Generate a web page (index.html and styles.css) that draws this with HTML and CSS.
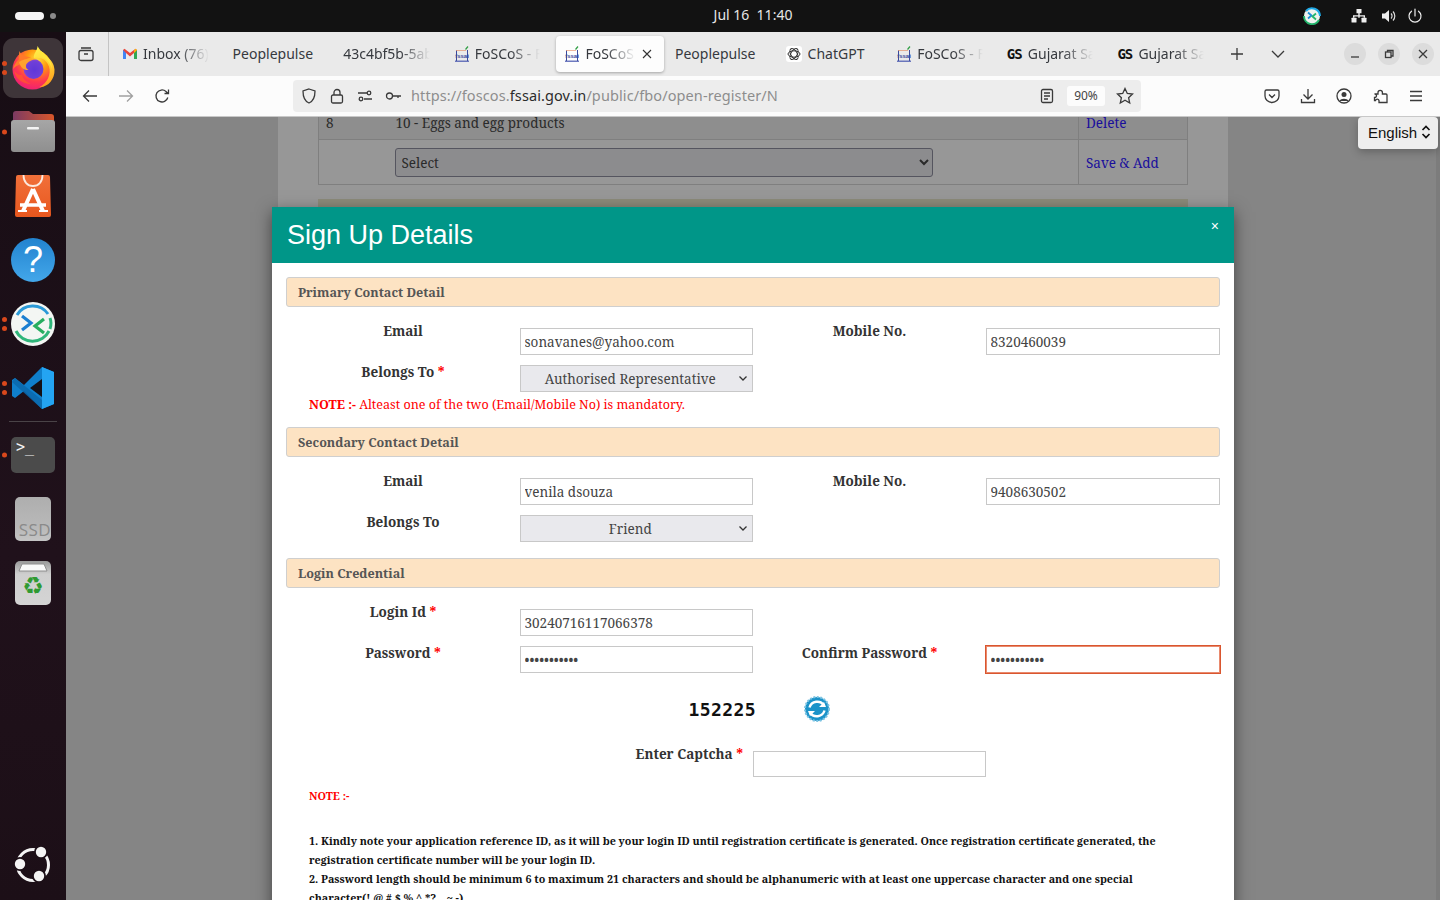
FILE: index.html
```html
<!DOCTYPE html>
<html lang="en">
<head>
<meta charset="utf-8">
<title>FoSCoS - Sign Up Details</title>
<link rel="stylesheet" href="styles.css">
</head>
<body>
<header class="topbar">
  <div class="workspaces"><span class="ws-pill"></span><span class="ws-dot"></span></div>
  <div class="clock">Jul 16&nbsp;&nbsp;11:40</div>
  <div class="tray">
    <svg class="tray-rd" width="18" height="18" viewBox="0 0 18 18"><circle cx="9" cy="9" r="8" fill="#eef3ef"/><path d="M3 4a8 8 0 0 1 14 5" fill="none" stroke="#1fa9e6" stroke-width="2"/><path d="M1 9a8 8 0 0 0 15 4" fill="none" stroke="#23b56c" stroke-width="2"/><path d="M5 5.500L8.500 8.500 5 11.500" fill="none" stroke="#1b8fd8" stroke-width="1.800"/><path d="M13 6.500L9.500 9.500l3.500 3" fill="none" stroke="#23b56c" stroke-width="1.800"/></svg>
    <svg class="tray-net" width="16" height="16" viewBox="0 0 16 16"><path d="M5.500 1h5v4.200h-1.800v2.100H14v2.500h-1.400V8.600H8.700v1.200H7.300V8.600H3.400v1.200H2V7.300h5.300V5.200H5.500z" fill="#eee"/><rect x="0.500" y="9.800" width="5" height="4.700" rx=".5" fill="#eee"/><rect x="10.500" y="9.800" width="5" height="4.700" rx=".5" fill="#eee"/></svg>
    <svg class="tray-vol" width="16" height="16" viewBox="0 0 16 16"><path fill="#eee" d="M1 5.500h3L8 2v12l-4-3.500H1z"/><path d="M10 5.500a3.500 3.500 0 0 1 0 5M12 3.500a6.500 6.500 0 0 1 0 9" fill="none" stroke="#ddd" stroke-width="1.200"/></svg>
    <svg class="tray-pow" width="16" height="16" viewBox="0 0 16 16"><path d="M8 1v7M4.500 3.200a6 6 0 1 0 7 0" fill="none" stroke="#eee" stroke-width="1.200" stroke-linecap="round"/></svg>
  </div>
</header>

<div class="desktop">
  <nav class="dock">
    <div class="dock-item active">
      <span class="dots"><i></i><i></i></span>
      <svg width="44" height="44" viewBox="0 0 44 44">
        <defs>
          <radialGradient id="fxBase" cx="0.62" cy="0.25" r="0.9"><stop offset="0" stop-color="#ffe03a"/><stop offset="0.3" stop-color="#ff980e"/><stop offset="0.62" stop-color="#ff3750"/><stop offset="1" stop-color="#e31587"/></radialGradient>
          <linearGradient id="fxFlame" x1="0.4" y1="0" x2="0.6" y2="1"><stop offset="0" stop-color="#fff04a"/><stop offset="0.6" stop-color="#ffc52e"/><stop offset="1" stop-color="#ff9a1c"/></linearGradient>
          <radialGradient id="fxGlobe" cx="0.55" cy="0.55" r="0.6"><stop offset="0" stop-color="#5f37d8"/><stop offset="0.7" stop-color="#6f3fd8"/><stop offset="1" stop-color="#a246c8"/></radialGradient>
        </defs>
        <circle cx="21.500" cy="23.500" r="20" fill="url(#fxBase)"/>
        <path d="M26.500 0C26.500 5 22 7.500 23 12c7-1.500 13 2 15 8.500 2.500 8-2 17-9.500 20.500C37 41.500 44 33 43.500 23.500 43 12 32 10 26.500 0z" fill="url(#fxFlame)"/>
        <path d="M30 5c6 4 11 10 11 18-2-7-6-10-11-13-1-2-1-3 0-5z" fill="#ffe63a"/>
        <circle cx="22.500" cy="23" r="10" fill="url(#fxGlobe)"/>
        <path d="M8.500 5c-.5 3-1 6-.5 8.500-3 2.500-5.500 6-6 9.500 3-3.500 7-5 10.500-5 .5-3.500 4-6.500 7.500-6.500-2-1-4-.5-6-1.500C11.500 9 9.500 8 8.500 5z" fill="#ff7a2a"/>
        <path d="M8 16c5-3.500 12-4.500 18-2.500-5 0-9.500 2-11 5.500-.5 2 .5 4 2.500 5-4 .5-8-2-9.500-8z" fill="#ffa32e"/>
        <path d="M3 24c1 9 9 14 17 14-5-2-8-5-9-9-4 .5-6-2-8-5z" fill="#ff5a2a" opacity=".75"/>
      </svg>
    </div>
    <div class="dock-item">
      <span class="dots"><i></i></span>
      <svg width="44" height="42" viewBox="0 0 44 42">
        <defs>
          <linearGradient id="fdBack" x1="0" y1="0" x2="1" y2="0"><stop offset="0" stop-color="#7c3a63"/><stop offset="1" stop-color="#d9572a"/></linearGradient>
          <linearGradient id="fdFront" x1="0" y1="0" x2="0" y2="1"><stop offset="0" stop-color="#a6a6a6"/><stop offset="1" stop-color="#8f8f8f"/></linearGradient>
        </defs>
        <path d="M2 16V3a3 3 0 0 1 3-3h13l4 3h18a3 3 0 0 1 3 3v12z" fill="url(#fdBack)"/>
        <path d="M3 9h38a3 3 0 0 1 3 3v26a3 3 0 0 1-3 3H3a3 3 0 0 1-3-3V12a3 3 0 0 1 3-3z" fill="url(#fdFront)"/>
        <rect x="16" y="16" width="12" height="2.500" rx="1" fill="#f4f4f4"/>
      </svg>
    </div>
    <div class="dock-item">
      <svg width="36" height="42" viewBox="0 0 36 42">
        <defs><linearGradient id="stBag" x1="0" y1="0" x2="0" y2="1"><stop offset="0" stop-color="#f1703a"/><stop offset="1" stop-color="#e8571e"/></linearGradient></defs>
        <path d="M3 0h30a2 2 0 0 1 2 2l1 38a2 2 0 0 1-2 2H2a2 2 0 0 1-2-2L1 2a2 2 0 0 1 2-2z" fill="url(#stBag)"/>
        <path d="M8.500 0c0 7 4 11 9.500 11S27.500 7 27.500 0" fill="none" stroke="#fbe9df" stroke-width="1.800"/>
        <path d="M18 14L8 36M18 14l10 22" stroke="#fff" stroke-width="4" fill="none"/>
        <path d="M5 30h26" stroke="#fff" stroke-width="3.500"/>
        <path d="M3 36h9M24 36h9" stroke="#fff" stroke-width="2"/>
      </svg>
    </div>
    <div class="dock-item">
      <div class="help-icon">?</div>
    </div>
    <div class="dock-item">
      <span class="dots"><i></i><i></i></span>
      <svg width="44" height="44" viewBox="0 0 44 44">
        <circle cx="22" cy="22" r="22" fill="#f3f6f3"/>
        <path d="M5 29a18.500 18.500 0 0 0 33 0" fill="none" stroke="#2fb67a" stroke-width="3"/>
        <path d="M6 13a18.500 18.500 0 0 1 31-1" fill="none" stroke="#2b9ad8" stroke-width="3"/>
        <path d="M39 16c1.500 4 1 8 0 11" fill="none" stroke="#2fb67a" stroke-width="3"/>
        <path d="M11 14l9 7-9 7" fill="none" stroke="#1a7fd1" stroke-width="3.200"/>
        <path d="M33 17l-9 7 9 7" fill="none" stroke="#27ae60" stroke-width="3.200"/>
      </svg>
    </div>
    <div class="dock-item">
      <span class="dots"><i></i><i></i></span>
      <svg width="44" height="44" viewBox="0 0 44 44">
        <path d="M31 1L13 19 4 12 1 14v16l3 2 9-7 18 18 12-5V6z" fill="#0f7fcb"/>
        <path d="M31 1l12 5v32l-12 5z" fill="#24a4f2"/>
        <path d="M4 12l27 22v9L1 16z" fill="#0b69ad" opacity=".85"/>
        <path d="M31 13L19 22l12 9z" fill="#151015"/>
      </svg>
    </div>
    <div class="dock-sep"></div>
    <div class="dock-item">
      <span class="dots"><i></i></span>
      <div class="term-icon">&gt;_</div>
    </div>
    <div class="dock-item"><div class="ssd-icon">SSD</div></div>
    <div class="dock-item">
      <div class="trash-icon">
        <svg class="trash-lid" width="30" height="9" viewBox="0 0 30 9"><path d="M4 1h22l3 7H1z" fill="#fafafa" stroke="#8e8e8e"/></svg>
        <span class="recycle">♻</span>
      </div>
    </div>
    <div class="dock-spacer"></div>
    <div class="dock-ubuntu">
      <svg width="38" height="38" viewBox="0 0 38 38">
        <circle cx="19" cy="19" r="15.500" fill="none" stroke="#f4f4f4" stroke-width="3"/>
        <circle cx="6" cy="18" r="7" fill="#1c0f17"/><circle cx="27" cy="6" r="7" fill="#1c0f17"/><circle cx="25" cy="30" r="7" fill="#1c0f17"/>
        <circle cx="6" cy="18" r="5.200" fill="#f4f4f4"/><circle cx="27" cy="6" r="5.200" fill="#f4f4f4"/><circle cx="25" cy="30" r="5.200" fill="#f4f4f4"/>
      </svg>
    </div>
  </nav>

  <main class="browser">
    <div class="tabbar">
      <button class="fxview">
        <svg class="ic" width="16" height="16" viewBox="0 0 16 16"><rect x="1" y="4.500" width="14" height="10" rx="2"/><path d="M3 2h10M6 8h4"/></svg>
      </button>
      <div class="tabs">
        <div class="tab"><svg class="fav" width="16" height="16" viewBox="0 0 16 16"><path d="M1 4v9h3V7l4 3.500L12 7v6h3V4l-1.500-1.200L8 7 2.500 2.800z" fill="#e8453c"/><path d="M1 4v9h3V7z" fill="#4285f4"/><path d="M12 7v6h3V4z" fill="#34a853"/><path d="M13.500 2.800L15 4l-3 3V4.500z" fill="#fbbc04"/></svg><span class="tab-title">Inbox (76)</span></div>
        <div class="tab tab-fit"><span class="tab-title">Peoplepulse</span></div>
        <div class="tab"><span class="tab-title">43c4bf5b-5ab8</span></div>
        <div class="tab"><svg class="fav" width="16" height="16" viewBox="0 0 16 16"><path d="M2.500 15V4.500M13.500 15V4" stroke="#3b4a9c" fill="none"/><path d="M2.500 4.500h9" stroke="#e0713a" stroke-dasharray="1 1"/><path d="M1 15.200h14" stroke="#4a58b0" stroke-width="1.200"/><path d="M11.500 3.500l2.500-3" stroke="#2f9e44" stroke-width="1.200"/><text x="8" y="12" class="fav-text">fssai</text></svg><span class="tab-title">FoSCoS - FSSAI</span></div>
        <div class="tab tab-active"><svg class="fav" width="16" height="16" viewBox="0 0 16 16"><path d="M2.500 15V4.500M13.500 15V4" stroke="#3b4a9c" fill="none"/><path d="M2.500 4.500h9" stroke="#e0713a" stroke-dasharray="1 1"/><path d="M1 15.200h14" stroke="#4a58b0" stroke-width="1.200"/><path d="M11.500 3.500l2.500-3" stroke="#2f9e44" stroke-width="1.200"/><text x="8" y="12" class="fav-text">fssai</text></svg><span class="tab-title">FoSCoS - FSSAI</span><svg class="tab-close" width="10" height="10" viewBox="0 0 10 10"><path d="M1 1l8 8M9 1l-8 8" stroke="#333" stroke-width="1.100"/></svg></div>
        <div class="tab tab-fit"><span class="tab-title">Peoplepulse</span></div>
        <div class="tab tab-fit"><svg class="fav fav-white" width="16" height="16" viewBox="0 0 16 16"><g fill="none" stroke="#333" stroke-width="1"><ellipse cx="8" cy="8" rx="6" ry="3.200"/><ellipse cx="8" cy="8" rx="6" ry="3.200" transform="rotate(60 8 8)"/><ellipse cx="8" cy="8" rx="6" ry="3.200" transform="rotate(120 8 8)"/></g></svg><span class="tab-title">ChatGPT</span></div>
        <div class="tab"><svg class="fav" width="16" height="16" viewBox="0 0 16 16"><path d="M2.500 15V4.500M13.500 15V4" stroke="#3b4a9c" fill="none"/><path d="M2.500 4.500h9" stroke="#e0713a" stroke-dasharray="1 1"/><path d="M1 15.200h14" stroke="#4a58b0" stroke-width="1.200"/><path d="M11.500 3.500l2.500-3" stroke="#2f9e44" stroke-width="1.200"/><text x="8" y="12" class="fav-text">fssai</text></svg><span class="tab-title">FoSCoS - FSSAI</span></div>
        <div class="tab"><span class="fav gs">GS</span><span class="tab-title">Gujarat Samachar</span></div>
        <div class="tab"><span class="fav gs">GS</span><span class="tab-title">Gujarat Samachar</span></div>
      </div>
      <svg class="ic tab-plus" width="14" height="14" viewBox="0 0 14 14"><path d="M7 1v12M1 7h12"/></svg>
      <svg class="ic tab-list" width="14" height="14" viewBox="0 0 14 14"><path d="M1 4l6 6 6-6"/></svg>
      <div class="winctl">
        <span class="winbtn"><svg class="ic" width="10" height="10" viewBox="0 0 10 10"><path d="M1 8h8"/></svg></span>
        <span class="winbtn"><svg class="ic" width="10" height="10" viewBox="0 0 10 10"><rect x="1.500" y="3" width="5.500" height="5.500"/><path d="M3.500 3V1.500H9V7H7"/></svg></span>
        <span class="winbtn"><svg class="ic" width="10" height="10" viewBox="0 0 10 10"><path d="M1 1l8 8M9 1l-8 8"/></svg></span>
      </div>
    </div>

    <div class="navbar">
      <svg class="ic nav-back" width="16" height="16" viewBox="0 0 16 16"><path d="M15 8H1.500M7 2.500L1.500 8 7 13.500"/></svg>
      <svg class="ic nav-fwd" width="16" height="16" viewBox="0 0 16 16"><path d="M1 8h13.500M9 2.500L14.500 8 9 13.500"/></svg>
      <svg class="ic nav-reload" width="16" height="16" viewBox="0 0 16 16"><path d="M13.800 9.500A6 6 0 1 1 12 3.500L14 5.500M14.500 1.500v4h-4"/></svg>
      <div class="urlbar">
        <svg class="ic ub-ic" width="16" height="16" viewBox="0 0 16 16"><path d="M8 1l6 2c0 6-1 10-6 12C3 13 2 9 2 3z"/></svg>
        <svg class="ic ub-ic" width="16" height="16" viewBox="0 0 16 16"><rect x="2.500" y="7" width="11" height="8" rx="1.500"/><path d="M5 7V4.500a3 3 0 0 1 6 0V7"/></svg>
        <svg class="ic ub-ic" width="16" height="16" viewBox="0 0 16 16"><circle cx="4" cy="11" r="1.800"/><circle cx="12" cy="5" r="1.800"/><path d="M1 5h9M7 11h8"/></svg>
        <svg class="ic ub-ic" width="16" height="16" viewBox="0 0 16 16"><circle cx="4.500" cy="8" r="3"/><path d="M7.500 8H16M13 8v2"/></svg>
        <span class="url">https://foscos.<b>fssai.gov.in</b>/public/fbo/open-register/N</span>
        <svg class="ic ub-reader" width="14" height="16" viewBox="0 0 14 16"><rect x="1.500" y="1.500" width="11" height="13" rx="1.500"/><path d="M4 5h6M4 8h6M4 11h4"/></svg>
        <span class="zoom-pill">90%</span>
        <svg class="ic ub-star" width="18" height="18" viewBox="0 0 18 18"><path d="M9 1.500l2.300 5 5.200.6-3.900 3.600 1.100 5.300L9 13.300 4.300 16l1.100-5.300L1.500 7.100l5.200-.6z"/></svg>
      </div>
      <div class="nav-right">
        <svg class="ic" width="16" height="16" viewBox="0 0 16 16"><path d="M2.500 2h11A1.500 1.500 0 0 1 15 3.500V8a7 6.500 0 0 1-14 0V3.500A1.500 1.500 0 0 1 2.500 2zM5 6.500L8 9.500l3-3"/></svg>
        <svg class="ic" width="16" height="16" viewBox="0 0 16 16"><path d="M8 1v10M3.500 6.500L8 11l4.500-4.500M1.500 11v3.500h13V11"/></svg>
        <svg class="ic" width="16" height="16" viewBox="0 0 16 16"><circle cx="8" cy="8" r="7"/><circle cx="8" cy="6.500" r="2.500" class="ic-fill"/><path d="M3.500 13c1-3 8-3 9 0z" class="ic-fill"/></svg>
        <svg class="ic" width="16" height="16" viewBox="0 0 16 16"><path d="M1.500 6H5V4.500a2.200 2.200 0 0 1 4.400 0V6H13a1 1 0 0 1 1 1v7.500H6v-2a1.800 1.800 0 0 0-3.500 0H1.500V9.500a1.800 1.800 0 0 0 2-2 1.800 1.800 0 0 0-2-1.500z"/></svg>
        <svg class="ic" width="14" height="14" viewBox="0 0 14 14"><path d="M1 2.500h12M1 7h12M1 11.500h12"/></svg>
      </div>
    </div>

    <div class="viewport">
      <div class="page">
        <table class="food-table">
          <tr class="row-odd">
            <td class="c-no">8</td>
            <td class="c-name">10 - Eggs and egg products</td>
            <td class="c-act"><a>Delete</a></td>
          </tr>
          <tr>
            <td class="c-no"></td>
            <td class="c-name"><select class="bg-select"><option>Select</option></select></td>
            <td class="c-act"><a>Save &amp; Add</a></td>
          </tr>
        </table>
        <div class="beige-band"></div>
      </div>

      <div class="scroll-line"></div>
      <div class="lang-select">
        <span>English</span>
        <svg width="10" height="16" viewBox="0 0 10 16"><path d="M1.500 6L5 2.500 8.500 6M1.500 10L5 13.500 8.500 10" fill="none" stroke="#111" stroke-width="1.700"/></svg>
      </div>

      <section class="modal">
        <div class="modal-head">
          <h1>Sign Up Details</h1>
          <span class="modal-close">×</span>
        </div>
        <div class="modal-body">
          <div class="sec-head">Primary Contact Detail</div>
          <div class="form-grid">
            <label>Email</label>
            <input value="sonavanes@yahoo.com">
            <label>Mobile No.</label>
            <input value="8320460039">
            <label>Belongs To <em>*</em></label>
            <select><option>Authorised Representative</option></select>
          </div>
          <p class="note-line"><b>NOTE :-</b> Alteast one of the two (Email/Mobile No) is mandatory.</p>

          <div class="sec-head">Secondary Contact Detail</div>
          <div class="form-grid">
            <label>Email</label>
            <input value="venila dsouza">
            <label>Mobile No.</label>
            <input value="9408630502">
            <label>Belongs To</label>
            <select><option>Friend</option></select>
          </div>

          <div class="sec-head sec-login">Login Credential</div>
          <div class="form-grid">
            <label>Login Id <em>*</em></label>
            <input value="30240716117066378">
            <span></span><span></span>
            <label>Password <em>*</em></label>
            <input type="password" value="Abcdefgh@12">
            <label>Confirm Password <em>*</em></label>
            <input class="focused" type="password" value="Abcdefgh@12">
          </div>

          <div class="captcha-row">
            <span class="captcha-code">152225</span>
            <svg class="captcha-refresh" width="26" height="26" viewBox="0 0 26 26">
              <circle cx="13" cy="13" r="12" fill="#1b93c9" stroke="#7cc3e2" stroke-width="2" stroke-dasharray="2 1.500"/>
              <path d="M5.500 11.500A8 8 0 0 1 20 9.500" fill="none" stroke="#fff" stroke-width="2.400"/>
              <path d="M20.500 14.500A8 8 0 0 1 6 16.500" fill="none" stroke="#fff" stroke-width="2.400"/>
              <path d="M15 11h7l-2-5zM11 15H4l2 5z" fill="#fff"/>
            </svg>
          </div>
          <div class="form-grid captcha-input">
            <span></span>
            <label class="captcha-label">Enter Captcha <em>*</em></label>
            <input>
          </div>

          <p class="note-small">NOTE :-</p>
          <ol class="note-list">
            <li>1. Kindly note your application reference ID, as it will be your login ID until registration certificate is generated. Once registration certificate generated, the registration certificate number will be your login ID.</li>
            <li>2. Password length should be minimum 6 to maximum 21 characters and should be alphanumeric with at least one uppercase character and one special character(! @ # $ % ^ *? _ ~ -)</li>
          </ol>
        </div>
      </section>
    </div>
  </main>
</div>
</body>
</html>
```

FILE: styles.css
```css
* { box-sizing: border-box; }
html, body { margin: 0; height: 100%; overflow: hidden; }
body { width: 1440px; height: 900px; display: flex; flex-direction: column; background: #111; font-family: "Noto Sans", sans-serif; }

/* top bar */
.topbar { height: 32px; flex: none; background: #121212; display: grid; grid-template-columns: 1fr auto 1fr; align-items: center; color: #e6e6e6; }
.workspaces { display: flex; align-items: center; gap: 6px; padding-left: 15px; }
.ws-pill { width: 29px; height: 8px; border-radius: 4px; background: #f5f5f5; }
.ws-dot { width: 6px; height: 6px; border-radius: 50%; background: #8a8a8a; }
.clock { font-size: 14px; padding-bottom: 4px; position: relative; left: 33px; }
.tray { position: relative; height: 32px; }
.tray svg { position: absolute; top: 8px; }
.tray-rd { left: 544px; top: 7px !important; }
.tray-net { left: 592px; }
.tray-vol { left: 622px; }
.tray-pow { left: 648px; }

/* layout */
.desktop { flex: 1; display: flex; min-height: 0; }
.dock { width: 66px; flex: none; background: linear-gradient(180deg, #170d14, #20111b 60%, #1c0f17); display: flex; flex-direction: column; align-items: center; padding-top: 4px; }
.dock-item { position: relative; width: 60px; height: 64px; flex: none; display: flex; align-items: center; justify-content: center; }
.dock-item.active { height: 60px; margin: 2px 0; background: #3e3539; border-radius: 11px; }
.dots { position: absolute; left: -1px; top: 50%; transform: translateY(-50%); display: flex; flex-direction: column; gap: 4px; }
.dots i { display: block; width: 5px; height: 5px; border-radius: 50%; background: #d9481c; }
.dock-sep { width: 48px; height: 1px; background: #4a4347; margin: 1px 0; flex: none; }
.dock-spacer { flex: 1; }
.dock-ubuntu { height: 38px; margin-bottom: 16px; flex: none; }
.help-icon { width: 44px; height: 44px; border-radius: 50%; background: linear-gradient(180deg, #2283cf, #43a7ea); color: #fff; text-align: center; font: 400 36px/44px "Liberation Sans", sans-serif; }
.term-icon { width: 44px; height: 36px; border-radius: 5px; background: #4b4b4b; color: #f4f4f4; font: 400 15px/1 "DejaVu Sans Mono", monospace; padding: 3px 5px; }
.ssd-icon { width: 36px; height: 44px; border-radius: 5px; background: linear-gradient(180deg, #aeaeae, #b9b9b9 70%, #c4c4c4); color: #8a8a8a; font: 400 17px/1 "Open Sans", sans-serif; text-align: right; padding: 24px 0 0 0; overflow: hidden; letter-spacing: .4px; }
.trash-icon { position: relative; width: 36px; height: 44px; border-radius: 5px; background: linear-gradient(180deg, #9a9a9a, #cfcfcf 30%, #d4d4d4); text-align: center; }
.trash-lid { position: absolute; left: 3px; top: 2px; }
.recycle { display: block; padding-top: 13px; font: 700 24px/1 "DejaVu Sans", sans-serif; color: #2f9a32; }

.browser { flex: 1; min-width: 0; display: flex; flex-direction: column; }

.ic { fill: none; stroke: #3a3a3a; stroke-width: 1.300; flex: none; }
.ic-fill { fill: #3a3a3a; stroke: none; }

/* tabs */
.tabbar { height: 44px; flex: none; background: #eaeaea; display: flex; align-items: center; }
.fxview { width: 43px; height: 44px; border: 0; border-right: 1px solid #c4c4c4; background: none; padding: 0 2px 0 0; display: flex; align-items: center; justify-content: center; }
.tabs { width: 1106px; margin-left: 4px; display: grid; grid-template-columns: repeat(10, 1fr); flex: none; }
.tab { position: relative; height: 36px; display: flex; align-items: center; padding: 0 15px 0 9px; font-size: 14px; color: #36393e; min-width: 0; }
.fav { flex: none; margin-right: 5px; }
.fav-white { background: #fff; border-radius: 3px; margin-right: 6px; }
.fav-text { font: 700 6px "Liberation Sans", sans-serif; text-anchor: middle; fill: #3b4a9c; }
.gs { width: 16px; font: 700 14px/16px "DejaVu Sans Mono", monospace; letter-spacing: -1px; color: #111; }
.tab-title { white-space: nowrap; overflow: hidden; flex: 1; min-width: 0; padding-bottom: 2px; -webkit-mask-image: linear-gradient(90deg, #000 calc(100% - 30px), transparent 100%); mask-image: linear-gradient(90deg, #000 calc(100% - 30px), transparent 100%); }
.tab-fit { padding-right: 4px; }
.tab-fit .tab-title { -webkit-mask-image: none; mask-image: none; }
.tab-active { background: #fdfdfd; border-radius: 4px; box-shadow: 0 1px 3px rgba(0,0,0,.3); margin: 0 2px 0 1px; padding: 0 12px 0 8px; }
.tab-close { flex: none; margin-left: 6px; }
.tab-plus { margin-left: 11px; }
.tab-list { margin-left: 27px; }
.winctl { margin-left: auto; padding-right: 6px; display: flex; gap: 12px; }
.winbtn { width: 22px; height: 22px; border-radius: 50%; background: #dcdcdc; display: flex; align-items: center; justify-content: center; }

/* nav */
.navbar { height: 41px; flex: none; background: #fcfcfc; border-bottom: 1px solid #c8c8c8; display: flex; align-items: center; padding-left: 16px; }
.nav-fwd { margin-left: 20px; stroke: #a0a0a0; }
.nav-reload { margin-left: 20px; }
.urlbar { width: 848px; height: 32px; margin-left: 123px; background: #ededed; border-radius: 4px; display: flex; align-items: center; padding-left: 8px; flex: none; }
.ub-ic { margin-right: 12px; }
.url { font-size: 14.500px; color: #8d8d8d; white-space: nowrap; margin-left: -2px; padding-bottom: 2px; letter-spacing: .1px; }
.url b { font-weight: 400; color: #2b2b2b; }
.ub-reader { margin-left: auto; }
.zoom-pill { width: 38px; height: 20px; margin-left: 13px; background: #fcfcfc; border-radius: 3px; font-size: 12px; line-height: 20px; text-align: center; color: #444; }
.ub-star { margin: 0 7px 0 11px; }
.nav-right { display: flex; gap: 20.200px; margin-left: 123px; align-items: center; }

/* page underneath */
.viewport { position: relative; flex: 1; min-height: 0; overflow: hidden; background: #858585; font-family: "Noto Serif", "DejaVu Serif", serif; }
.page { width: 950px; height: 100%; margin-left: 212px; background: #979797; padding: 0 40px; overflow: hidden; }
.food-table { width: 870px; table-layout: fixed; border-collapse: collapse; font-size: 13.500px; color: #2a2a2a; }
.food-table td { border: 1px solid #7f7f7f; padding: 0 7px; }
.food-table .c-no { border-right: 0; width: 70px; }
.food-table .c-name { border-left: 0; width: 690px; }
.row-odd td { height: 22px; background: #8e8e8e; border-top: 0; line-height: 13px; vertical-align: top; }
.food-table tr + tr td { height: 45px; padding-top: 2px; }
.c-act a { color: #1a0f9c; }
.bg-select { width: 538px; height: 29px; margin-left: -1px; border: 1px solid #55555f; border-radius: 3px; background: #8c8c8e; font: inherit; color: #2a2a2a; padding-left: 2px; }
.beige-band { height: 30px; margin-top: 14px; background: #8b8a7a; }

.lang-select { position: absolute; top: 0; right: 2px; width: 80px; height: 32px; background: #eeeeee; border-radius: 4px; box-shadow: 0 3px 8px rgba(0,0,0,.25); display: flex; align-items: center; justify-content: space-between; padding: 0 7px 2px 10px; font: 400 15px "Liberation Sans", sans-serif; color: #111; }
.scroll-line { position: absolute; top: 0; right: 0; bottom: 0; width: 4px; background: #7c7c7c; }

/* modal */
.modal { position: absolute; left: 206px; top: 90px; width: 962px; height: 720px; background: #fff; box-shadow: 0 5px 15px rgba(0,0,0,.5); }
.modal-head { height: 56px; background: #009688; color: #fff; display: flex; justify-content: space-between; padding: 0 15px 0 15px; }
.modal-head h1 { margin: 0; font: 400 27px/56px "Liberation Sans", sans-serif; }
.modal-close { font: 400 14px/38px "Liberation Sans", sans-serif; }
.modal-body { padding: 14px 14px 0; color: #333; }
.sec-head { height: 30px; background: #fde3c3; border: 1px solid #cfcfcf; border-radius: 3px; padding-left: 11px; font-size: 12.600px; font-weight: 700; line-height: 29px; color: #555; margin-bottom: 21px; }
.form-grid { display: grid; grid-template-columns: 234px 233px 233px 234px; row-gap: 10px; align-items: start; }
.form-grid label { font-size: 13.500px; font-weight: 700; line-height: 14px; text-align: center; color: #333; margin-top: -4px; }
.form-grid label:nth-child(n+5) { margin-top: 0; }
.form-grid em { font-style: normal; color: #f00; }
.form-grid input, .form-grid select { width: 100%; height: 27px; border: 1px solid #c8c8c8; background: #fff; padding: 0 3.500px; font: 400 13.500px "Noto Serif", "DejaVu Serif", serif; color: #444; border-radius: 0; outline: 0; }
.form-grid select { appearance: none; -webkit-appearance: none; background: #e9e9ed url("data:image/svg+xml,%3Csvg xmlns='http://www.w3.org/2000/svg' width='8' height='5'%3E%3Cpath d='M.5.5l3.500 3.500 3.500-3.500' fill='none' stroke='%23333' stroke-width='1.300'/%3E%3C/svg%3E") no-repeat right 5px center; text-align: center; text-align-last: center; padding-right: 16px; }
.form-grid .focused { outline: 1px solid #d9562f; border-color: #e98a6e; }
.note-line { margin: 3px 0 13px; padding-left: 23px; font-size: 12.550px; line-height: 19px; color: #f00; }
.sec-login { margin-top: 16px; }
.captcha-row { display: flex; align-items: center; height: 38px; margin-top: 17px; }
.captcha-code { width: 470px; padding-top: 2px; text-align: right; font: 700 18px/1 "DejaVu Sans Mono", monospace; letter-spacing: .4px; color: #111; }
.captcha-refresh { margin-left: 48px; }
.captcha-input { margin-top: 23px; }
.captcha-input input { height: 26px; }
.captcha-input .captcha-label { text-align: right; padding-right: 10px; margin-top: -4px; }
.note-small { margin: 11px 0 0; padding-left: 23px; font-size: 10.800px; font-weight: 700; line-height: 15px; color: #f00; }
.note-list { list-style: none; margin: 29px 0 0; padding: 0 40px 0 23px; font-size: 10.750px; font-weight: 700; line-height: 19px; color: #111; }
```
